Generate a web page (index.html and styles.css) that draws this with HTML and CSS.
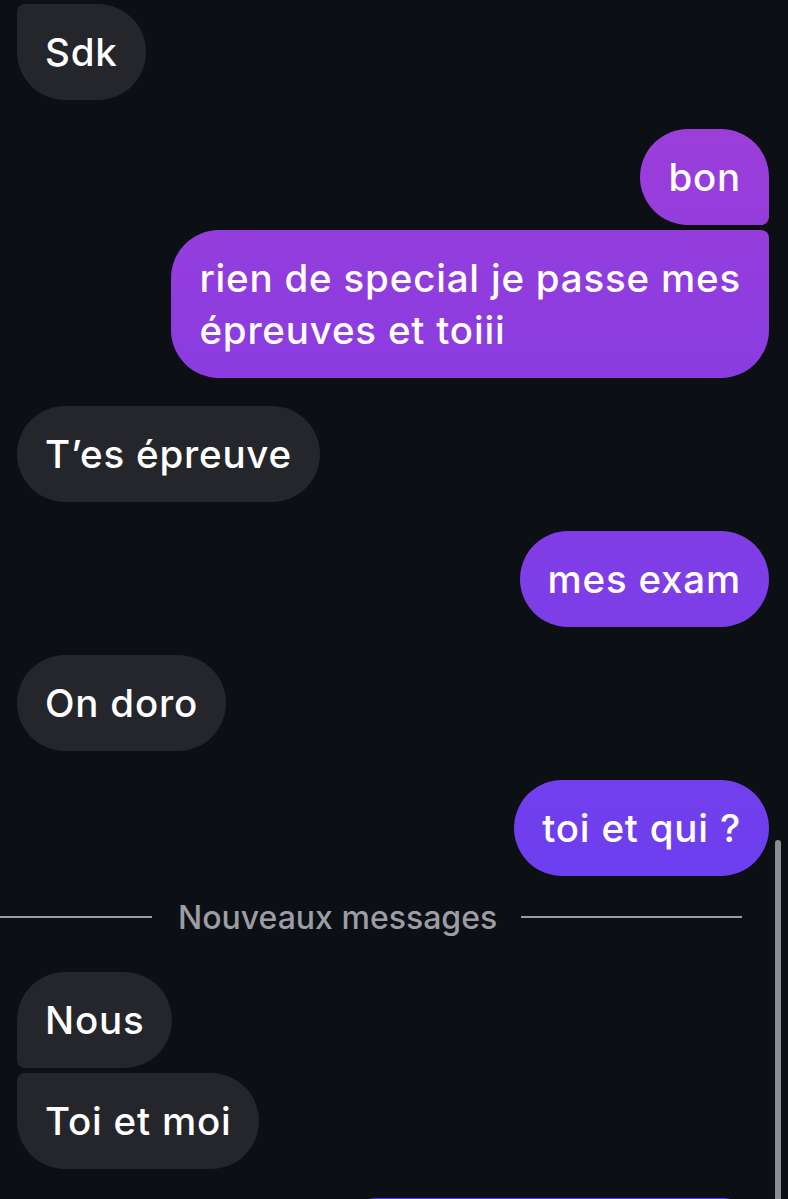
FILE: index.html
```html
<!DOCTYPE html>
<html lang="fr">
<head>
<meta charset="utf-8">
<title>Messages</title>
<link rel="stylesheet" href="styles.css">
</head>
<body>
<div class="chat">
  <div class="group in">
    <div class="bubble recv last">Sdk</div>
  </div>
  <div class="group out">
    <div class="bubble sent first">bon</div>
    <div class="bubble sent last">rien de special je passe mes<br>épreuves et toiii</div>
  </div>
  <div class="group in">
    <div class="bubble recv">T’es épreuve</div>
  </div>
  <div class="group out">
    <div class="bubble sent">mes exam</div>
  </div>
  <div class="group in">
    <div class="bubble recv">On doro</div>
  </div>
  <div class="group out">
    <div class="bubble sent">toi et qui ?</div>
  </div>
  <div class="divider">
    <span class="line left"></span>
    <span class="label">Nouveaux messages</span>
    <span class="line right"></span>
  </div>
  <div class="group in">
    <div class="bubble recv first">Nous</div>
    <div class="bubble recv last">Toi et moi</div>
  </div>
  <div class="group out">
    <div class="bubble sent next"></div>
  </div>
</div>
<div class="scrollbar"></div>
</body>
</html>
```

FILE: styles.css
```css
html, body {
  margin: 0;
  padding: 0;
  height: 100%;
}
body {
  background: #0c0f14;
  overflow: hidden;
  font-family: Inter, "Liberation Sans", Arial, sans-serif;
  position: relative;
}
.chat {
  display: flex;
  flex-direction: column;
  gap: 28.5px;
  padding: 4px 19px 0 17px;
}
.group {
  display: flex;
  flex-direction: column;
  gap: 5px;
}
.group.in { align-items: flex-start; }
.group.out { align-items: flex-end; }
.bubble {
  box-sizing: border-box;
  min-height: 96px;
  padding: 22px 28px;
  font-size: 38.5px;
  line-height: 52px;
  font-weight: 550;
  color: #ffffff;
  border-radius: 48px;
  letter-spacing: 0.8px;
}
.recv {
  background: #24262b;
}
.sent {
  background: linear-gradient(180deg, #a53fd6 0%, #8b3ce0 30%, #733fec 65%, #563ff8 100%);
  background-attachment: fixed;
}
.recv.first { border-bottom-left-radius: 8px; }
.recv.last { border-top-left-radius: 8px; }
.sent.first { border-bottom-right-radius: 8px; }
.sent.last { border-top-right-radius: 8px; }
.bubble.next {
  width: 439px;
}
.divider {
  display: flex;
  align-items: center;
  height: 40px;
  margin: -7px 27px 6.5px -17px;
}
.line {
  height: 2px;
  background: #9a9ca2;
}
.line.left {
  width: 152px;
  margin-right: 26px;
}
.line.right {
  flex: 1;
  margin-left: 24px;
}
.label {
  font-size: 32px;
  font-weight: 500;
  color: #9b9da4;
  white-space: nowrap;
}
.scrollbar {
  position: absolute;
  left: 775px;
  top: 840px;
  width: 6px;
  height: 400px;
  border-radius: 3px;
  background: #8b8c90;
}
```
